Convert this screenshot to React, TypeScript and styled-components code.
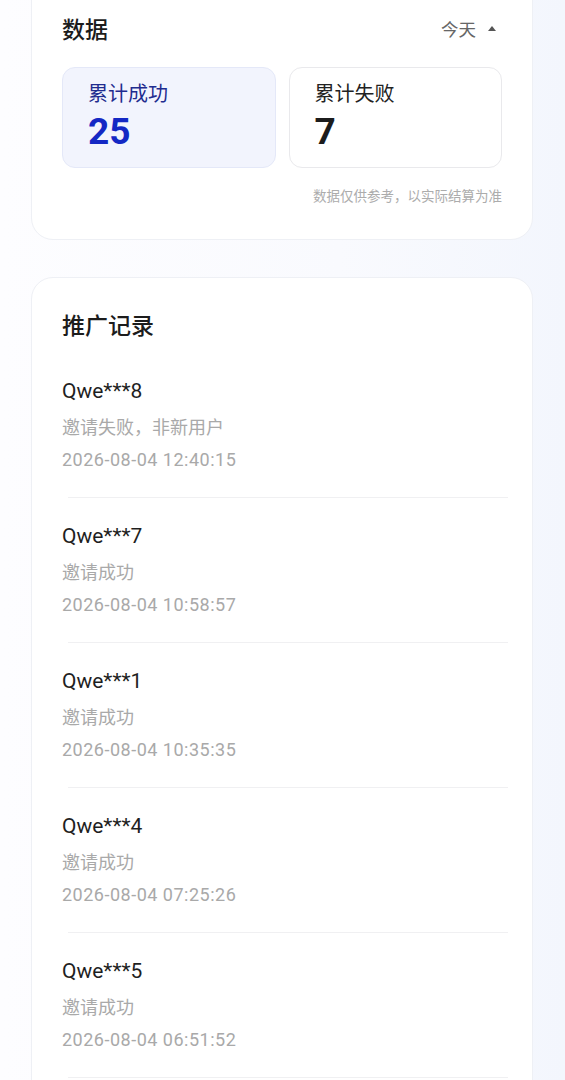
import styled, { createGlobalStyle } from 'styled-components';

const GlobalStyle = createGlobalStyle`
  html, body {
    margin: 0;
    padding: 0;
  }
  body {
    background: linear-gradient(90deg, #fdfdff 0%, #f9fafe 60%, #f3f6fd 100%);
    font-family: Roboto, 'Noto Sans CJK SC', sans-serif;
    overflow: hidden;
  }
`;

// 推广记录 mock data
const records = [
  { id: 1, name: 'Qwe***8', status: '邀请失败，非新用户', time: '2026-08-04 12:40:15' },
  { id: 2, name: 'Qwe***7', status: '邀请成功', time: '2026-08-04 10:58:57' },
  { id: 3, name: 'Qwe***1', status: '邀请成功', time: '2026-08-04 10:35:35' },
  { id: 4, name: 'Qwe***4', status: '邀请成功', time: '2026-08-04 07:25:26' },
  { id: 5, name: 'Qwe***5', status: '邀请成功', time: '2026-08-04 06:51:52' },
];

const App = () => {
  return (
    <>
      <GlobalStyle />
      <Page>
        <StatsCard>
          <Header>
            <Title>数据</Title>
            <RangePicker>
              今天
              <Caret />
            </RangePicker>
          </Header>
          <StatRow>
            <StatBox active>
              <StatLabel active>累计成功</StatLabel>
              <StatValue active>25</StatValue>
            </StatBox>
            <StatBox>
              <StatLabel>累计失败</StatLabel>
              <StatValue>7</StatValue>
            </StatBox>
          </StatRow>
          <Note>数据仅供参考，以实际结算为准</Note>
        </StatsCard>

        <RecordCard>
          <Title>推广记录</Title>
          <RecordList>
            {records.map((r) => (
              <Record key={r.id}>
                <RecordName>{r.name}</RecordName>
                <RecordStatus>{r.status}</RecordStatus>
                <RecordTime>{r.time}</RecordTime>
                <Divider />
              </Record>
            ))}
          </RecordList>
        </RecordCard>
      </Page>
    </>
  );
};

export default App;

const Page = styled.div`
  display: flex;
  flex-direction: column;
  gap: 37px;
  padding: 0 32px 0 31px;
  margin-top: -24px;
`;

const Card = styled.div`
  background: #ffffff;
  border: 1px solid #eef0f5;
  border-radius: 22px;
  padding: 0 30px;
`;

const StatsCard = styled(Card)`
  padding-top: 36px;
  padding-bottom: 35px;
`;

const RecordCard = styled(Card)`
  padding-top: 31px;
  padding-bottom: 60px;
`;

const Header = styled.div`
  display: flex;
  align-items: center;
  justify-content: space-between;
`;

const Title = styled.div`
  font-family: 'Noto Sans CJK SC', sans-serif;
  font-size: 23px;
  line-height: 30px;
  font-weight: 500;
  color: #1c1c1c;
`;

const RangePicker = styled.div`
  display: flex;
  align-items: center;
  gap: 12px;
  font-family: 'Noto Sans CJK SC', sans-serif;
  font-size: 17.5px;
  color: #666666;
  padding-right: 6px;
`;

const Caret = styled.span`
  width: 0;
  height: 0;
  border-left: 4.5px solid transparent;
  border-right: 4.5px solid transparent;
  border-bottom: 5px solid #555555;
  margin-top: 1px;
`;

const StatRow = styled.div`
  display: grid;
  grid-template-columns: 1fr 1fr;
  gap: 13px;
  margin-top: 24px;
`;

const StatBox = styled.div<{ active?: boolean }>`
  display: flex;
  flex-direction: column;
  gap: 6px;
  height: 101px;
  box-sizing: border-box;
  padding: 12px 25px 0;
  border-radius: 13px;
  background: ${({ active }) => (active ? '#f2f4fd' : '#ffffff')};
  border: 1px solid ${({ active }) => (active ? '#e4e8f8' : '#e9e9ec')};
`;

const StatLabel = styled.div<{ active?: boolean }>`
  font-family: 'Noto Sans CJK SC', sans-serif;
  font-size: 20px;
  line-height: 26px;
  color: ${({ active }) => (active ? '#1f2c8f' : '#222222')};
`;

const StatValue = styled.div<{ active?: boolean }>`
  font-family: Roboto, sans-serif;
  font-size: 37px;
  line-height: 40px;
  font-weight: 700;
  color: ${({ active }) => (active ? '#1428c4' : '#1c1c1c')};
`;

const Note = styled.div`
  margin-top: 18px;
  text-align: right;
  font-family: 'Noto Sans CJK SC', sans-serif;
  font-size: 13.5px;
  line-height: 18px;
  color: #acacac;
`;

const RecordList = styled.div`
  display: flex;
  flex-direction: column;
  margin-top: 14px;
`;

const Record = styled.div`
  display: flex;
  flex-direction: column;
  padding-top: 24px;
`;

const RecordName = styled.div`
  font-family: Roboto, sans-serif;
  font-size: 21px;
  line-height: 28px;
  color: #1f1f1f;
`;

const RecordStatus = styled.div`
  margin-top: 8px;
  font-family: 'Noto Sans CJK SC', sans-serif;
  font-size: 18px;
  line-height: 26px;
  color: #a9a9a9;
`;

const RecordTime = styled.div`
  margin-top: 8px;
  font-family: Roboto, sans-serif;
  font-size: 18px;
  line-height: 26px;
  letter-spacing: 0.5px;
  color: #a9a9a9;
`;

const Divider = styled.div`
  height: 1px;
  background: #f0f0f2;
  margin: 24px -6px 0 6px;
`;
